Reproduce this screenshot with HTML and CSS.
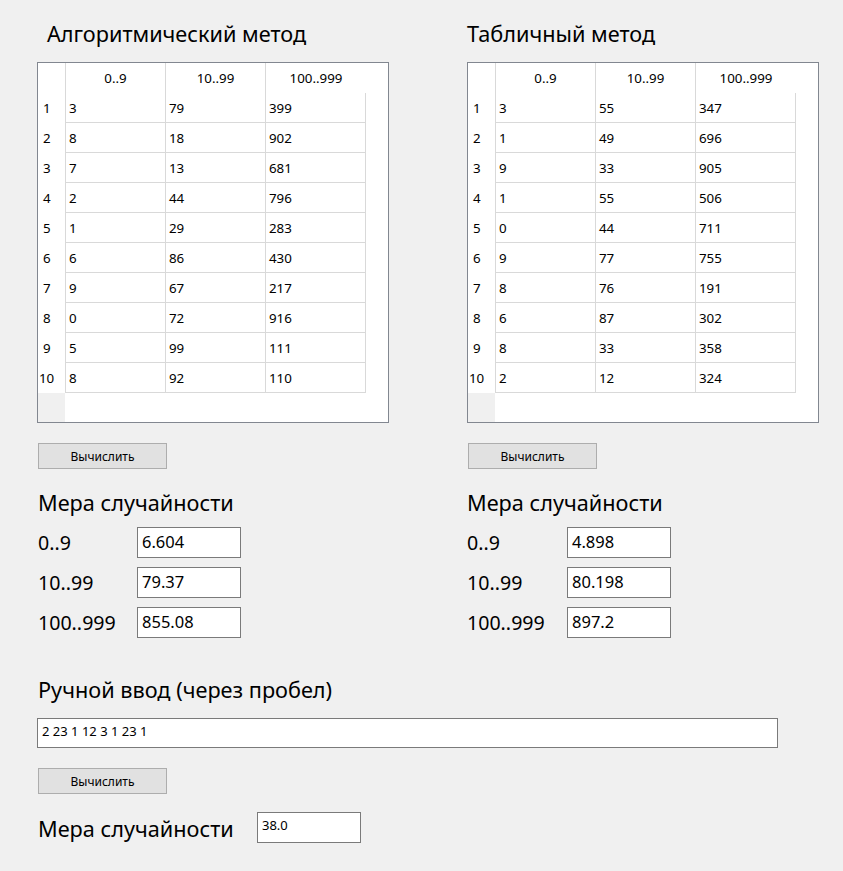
FILE: index.html
```html
<!DOCTYPE html>
<html lang="ru">
<head>
<meta charset="utf-8">
<title>Мера случайности</title>
<link rel="stylesheet" href="styles.css">
</head>
<body>
<div class="page">
  <div class="columns">
    <section class="col col-left">
      <h2 class="title title-left">Алгоритмический метод</h2>
      <div class="frame">
        <div class="grid">
          <div class="corner"></div>
          <div class="hh sep">0..9</div><div class="hh sep">10..99</div><div class="hh">100..999</div>
          <div class="vh">1</div><div class="c">3</div><div class="c">79</div><div class="c">399</div>
          <div class="vh">2</div><div class="c">8</div><div class="c">18</div><div class="c">902</div>
          <div class="vh">3</div><div class="c">7</div><div class="c">13</div><div class="c">681</div>
          <div class="vh">4</div><div class="c">2</div><div class="c">44</div><div class="c">796</div>
          <div class="vh">5</div><div class="c">1</div><div class="c">29</div><div class="c">283</div>
          <div class="vh">6</div><div class="c">6</div><div class="c">86</div><div class="c">430</div>
          <div class="vh">7</div><div class="c">9</div><div class="c">67</div><div class="c">217</div>
          <div class="vh">8</div><div class="c">0</div><div class="c">72</div><div class="c">916</div>
          <div class="vh">9</div><div class="c">5</div><div class="c">99</div><div class="c">111</div>
          <div class="vh vh10">10</div><div class="c">8</div><div class="c">92</div><div class="c">110</div>
        </div>
        <div class="filler"></div>
      </div>
      <button class="btn" type="button">Вычислить</button>
      <div class="measure">
        <h3 class="label-lg">Мера случайности</h3>
        <div class="mrow"><span class="mlabel">0..9</span><div class="field">6.604</div></div>
        <div class="mrow"><span class="mlabel">10..99</span><div class="field">79.37</div></div>
        <div class="mrow"><span class="mlabel">100..999</span><div class="field">855.08</div></div>
      </div>
    </section>
    <section class="col col-right">
      <h2 class="title">Табличный метод</h2>
      <div class="frame">
        <div class="grid">
          <div class="corner"></div>
          <div class="hh sep">0..9</div><div class="hh sep">10..99</div><div class="hh">100..999</div>
          <div class="vh">1</div><div class="c">3</div><div class="c">55</div><div class="c">347</div>
          <div class="vh">2</div><div class="c">1</div><div class="c">49</div><div class="c">696</div>
          <div class="vh">3</div><div class="c">9</div><div class="c">33</div><div class="c">905</div>
          <div class="vh">4</div><div class="c">1</div><div class="c">55</div><div class="c">506</div>
          <div class="vh">5</div><div class="c">0</div><div class="c">44</div><div class="c">711</div>
          <div class="vh">6</div><div class="c">9</div><div class="c">77</div><div class="c">755</div>
          <div class="vh">7</div><div class="c">8</div><div class="c">76</div><div class="c">191</div>
          <div class="vh">8</div><div class="c">6</div><div class="c">87</div><div class="c">302</div>
          <div class="vh">9</div><div class="c">8</div><div class="c">33</div><div class="c">358</div>
          <div class="vh vh10">10</div><div class="c">2</div><div class="c">12</div><div class="c">324</div>
        </div>
        <div class="filler"></div>
      </div>
      <button class="btn" type="button">Вычислить</button>
      <div class="measure measure-right">
        <h3 class="label-lg">Мера случайности</h3>
        <div class="mrow"><span class="mlabel">0..9</span><div class="field">4.898</div></div>
        <div class="mrow"><span class="mlabel">10..99</span><div class="field">80.198</div></div>
        <div class="mrow"><span class="mlabel">100..999</span><div class="field">897.2</div></div>
      </div>
    </section>
  </div>
  <section class="manual">
    <h3 class="label-lg">Ручной ввод (через пробел)</h3>
    <div class="long-field">2 23 1 12 3 1 23 1</div>
    <button class="btn" type="button">Вычислить</button>
    <div class="result-row">
      <span class="label-lg result-label">Мера случайности</span>
      <div class="small-field">38.0</div>
    </div>
  </section>
</div>
</body>
</html>
```
FILE: styles.css
```css
* { box-sizing: border-box; }

html, body {
  margin: 0;
  padding: 0;
  background: #f0f0f0;
  color: #000;
  font-family: "Noto Sans", "Open Sans", sans-serif;
}

.page {
  padding: 0 0 0 37px;
  width: 843px;
  height: 871px;
}

.columns {
  display: grid;
  grid-template-columns: 430px 352px;
}

.col {
  display: flex;
  flex-direction: column;
  align-items: flex-start;
}

.title {
  margin: 20px 0 14px 0;
  font-size: 21.7px;
  line-height: 28px;
  font-weight: normal;
}

.title-left {
  padding-left: 10px;
}

.frame {
  width: 352px;
  height: 361px;
  border: 1px solid #828790;
  background: #fff;
  display: flex;
  flex-direction: column;
}

.grid {
  display: grid;
  grid-template-columns: 28px 100px 100px 100px;
  grid-auto-rows: 30px;
  font-size: 13.33px;
}

.corner {
  border-right: 1px solid #d9d9d9;
}

.hh {
  display: flex;
  align-items: center;
  justify-content: center;
  padding-bottom: 1px;
}

.hh.sep {
  border-right: 1px solid #d9d9d9;
}

.vh {
  display: flex;
  align-items: center;
  padding-left: 5px;
  border-right: 1px solid #d9d9d9;
}

.vh10 {
  padding-left: 1px;
}

.c {
  display: flex;
  align-items: center;
  padding-left: 3px;
  border-right: 1px solid #d9d9d9;
  border-bottom: 1px solid #d9d9d9;
}

.filler {
  width: 27px;
  flex: 1;
  background: #f0f0f0;
}

.btn {
  margin: 20px 0 0 1px;
  width: 129px;
  height: 26px;
  border: 1px solid #adadad;
  background: #e1e1e1;
  font-family: "Noto Sans", "Open Sans", sans-serif;
  font-size: 12px;
  color: #000;
  padding: 0;
}

.measure {
  margin-top: 20px;
  padding-left: 1px;
  display: flex;
  flex-direction: column;
  gap: 9px;
}

.measure-right {
  padding-left: 0;
}

.label-lg {
  margin: 0;
  font-size: 21.7px;
  line-height: 28px;
  font-weight: normal;
}

.measure .label-lg {
  margin-bottom: 1px;
}

.mrow {
  display: flex;
  align-items: center;
  height: 31px;
}

.mlabel {
  width: 99px;
  font-size: 19.6px;
  line-height: 28px;
}

.measure-right .mlabel {
  width: 100px;
}

.field {
  width: 104px;
  height: 31px;
  border: 1px solid #7a7a7a;
  background: #fff;
  font-size: 16.5px;
  line-height: 28px;
  padding-left: 4px;
}

.manual {
  margin-top: 38px;
  padding-left: 1px;
  display: flex;
  flex-direction: column;
  align-items: flex-start;
}

.long-field {
  margin: 14px 0 0 -1px;
  width: 741px;
  height: 30px;
  border: 1px solid #7a7a7a;
  background: #fff;
  font-size: 13px;
  line-height: 18px;
  padding: 3px 4px 0 4px;
}

.manual .btn {
  margin-top: 20px;
  margin-left: 0;
}

.result-row {
  margin-top: 18px;
  display: flex;
  align-items: center;
}

.result-label {
  width: 219px;
  padding-top: 2px;
}

.small-field {
  width: 104px;
  height: 31px;
  border: 1px solid #7a7a7a;
  background: #fff;
  font-size: 13px;
  line-height: 18px;
  padding: 3px 4px 0 4px;
}
```
